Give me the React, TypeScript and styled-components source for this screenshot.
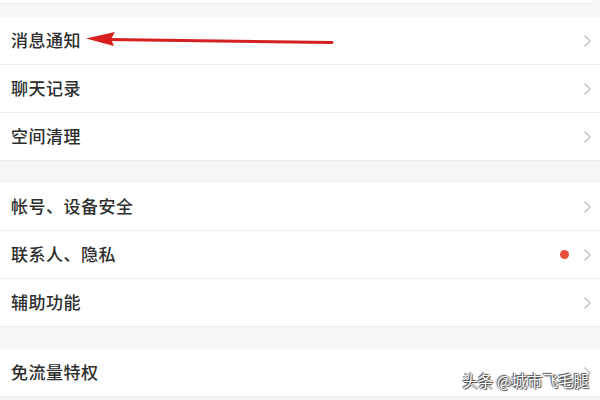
import React from 'react'
import styled, { createGlobalStyle } from 'styled-components'

const GlobalStyle = createGlobalStyle`
  html, body {
    margin: 0;
    padding: 0;
    background: #f6f6f8;
    font-family: "Noto Sans CJK SC", "Noto Sans", sans-serif;
  }
`;

type Item = { label: string; dot?: boolean };

const sections: Item[][] = [
  [{ label: '消息通知' }, { label: '聊天记录' }, { label: '空间清理' }],
  [{ label: '帐号、设备安全' }, { label: '联系人、隐私', dot: true }, { label: '辅助功能' }],
  [{ label: '免流量特权' }],
];

const Chevron = () => (
  <svg width="9" height="14" viewBox="0 0 9 14">
    <path d="M1.5 1.5 L7 7 L1.5 12.5" fill="none" stroke="#c6c6c6" strokeWidth="1.7" />
  </svg>
);

const App: React.FC = () => {
  return (
    <Page>
      <GlobalStyle />
      <TopStub />
      {sections.map((items, i) => (
        <Section key={i} $gap={i === 0 ? 13 : 22}>
          {items.map((item) => (
            <Row key={item.label}>
              <Label>{item.label}</Label>
              <Right>
                {item.dot && <Dot />}
                <Chevron />
              </Right>
            </Row>
          ))}
        </Section>
      ))}
      <Arrow width="260" height="20" viewBox="0 0 260 20">
        <path d="M22 8.5 L246 11.5" stroke="#d42020" strokeWidth="3" strokeLinecap="round" />
        <path d="M0 7.5 L29 1 L25 8 L28 15 Z" fill="#d81e1e" />
      </Arrow>
      <Watermark>头条 @城市飞毛腿</Watermark>
    </Page>
  )
}

export default App

const Page = styled.div`
  position: relative;
  width: 600px;
  height: 400px;
  overflow: hidden;
  background: #f6f6f8;
`;

const TopStub = styled.div`
  height: 3px;
  background: #fff;
  border-bottom: 1px solid #ececec;
  margin-right: 8px;
`;

const Section = styled.div<{ $gap: number }>`
  margin-top: ${({ $gap }) => $gap}px;
  background: #fff;
`;

const Row = styled.div`
  height: 47px;
  display: flex;
  align-items: center;
  justify-content: space-between;
  padding: 0 8px 0 11px;
  border-bottom: 1px solid #ededed;
`;

const Label = styled.span`
  font-size: 17px;
  font-weight: 500;
  color: #2e2e2e;
  line-height: 1;
  margin-bottom: 3px;
  letter-spacing: 0.5px;
`;

const Right = styled.div`
  display: flex;
  align-items: center;
  gap: 14px;
`;

const Dot = styled.span`
  width: 9px;
  height: 9px;
  border-radius: 50%;
  background: #e9503c;
`;

const Arrow = styled.svg`
  position: absolute;
  left: 86px;
  top: 31px;
`;

const Watermark = styled.div`
  position: absolute;
  right: 11px;
  top: 369px;
  font-size: 15.5px;
  color: #fff;
  text-shadow: 0 0 1px #333, 1px 1px 1px #444, -1px -1px 1px #555;
`;
